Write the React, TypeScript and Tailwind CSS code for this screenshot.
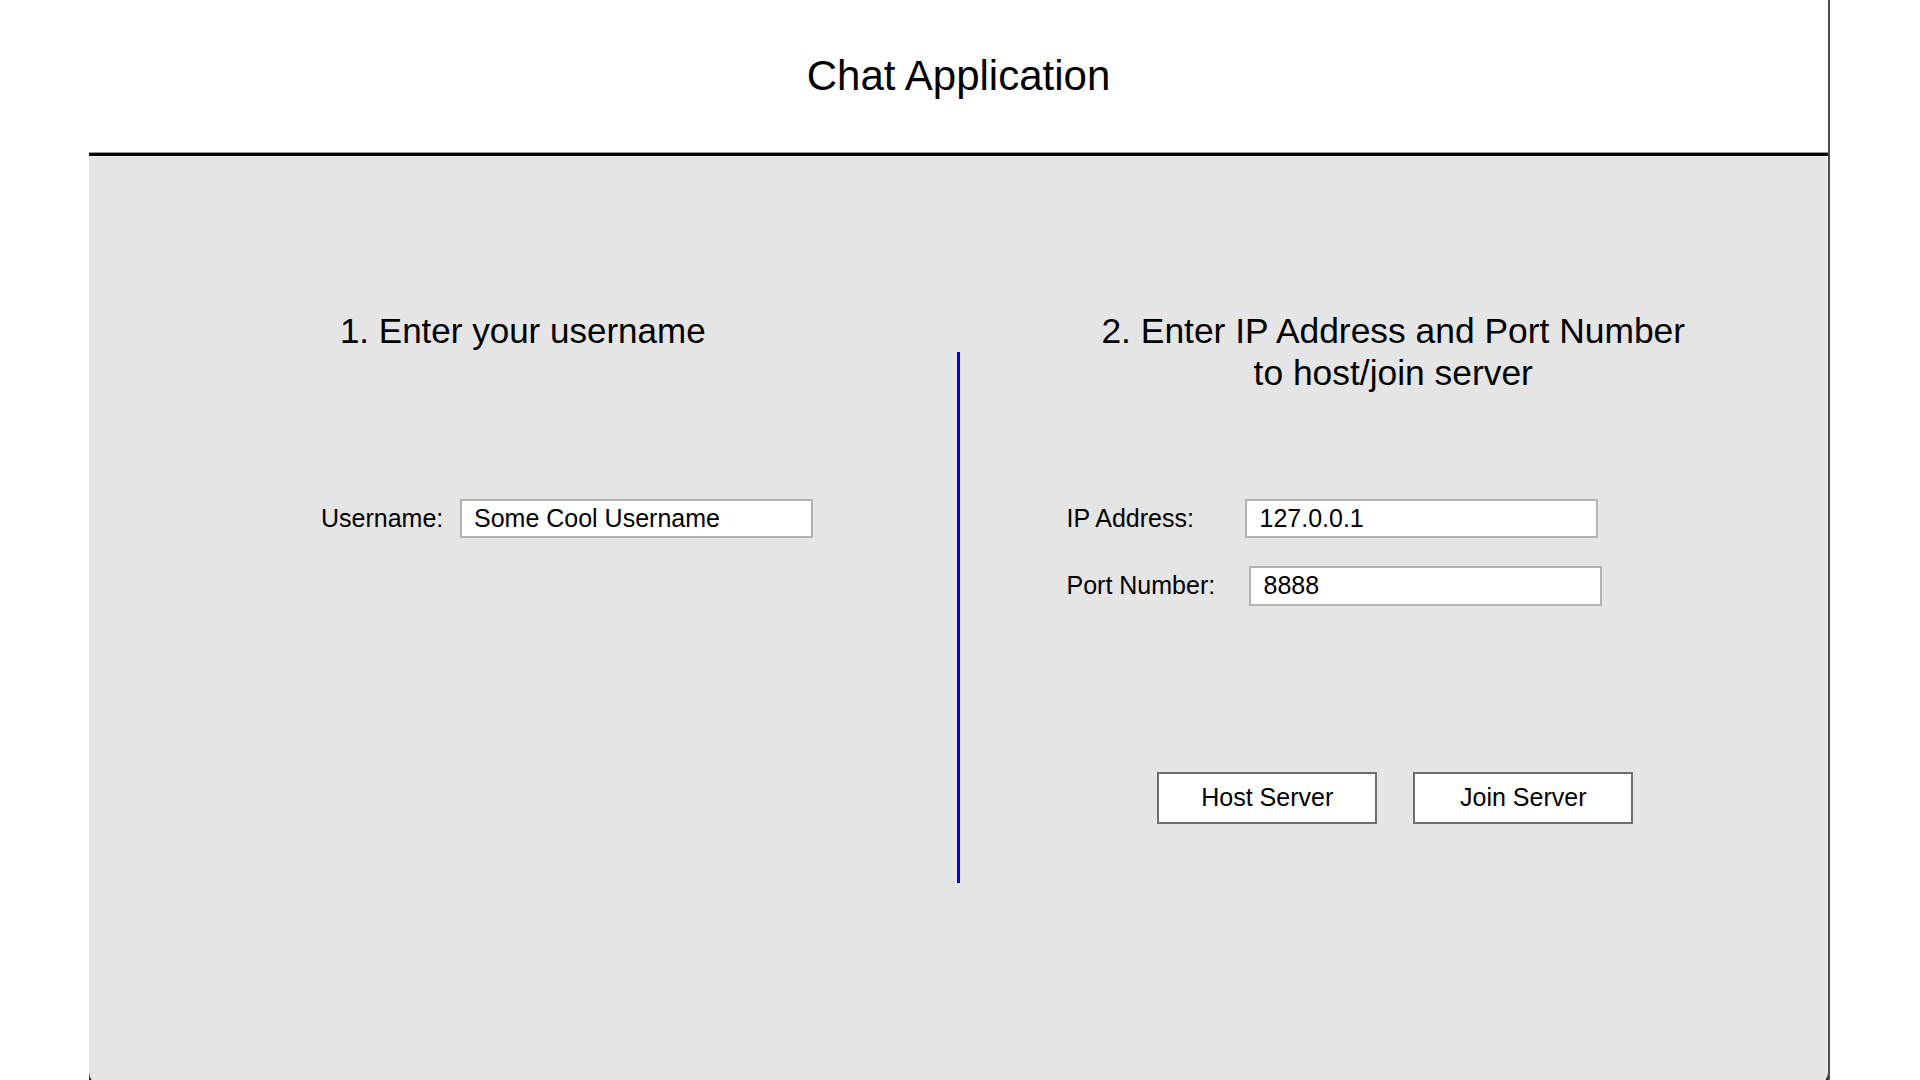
import React from "react";

const font = { fontFamily: '"Liberation Sans", Arial, sans-serif' };

export default function App() {
  return (
    <div className="w-[1920px] h-[1080px] overflow-hidden bg-white text-black" style={font}>
      <div className="ml-[89px] w-[1741px] h-[1086px] flex flex-col bg-[#2a2a2a] border-r-2 border-[#4d4d4d]">
        {/* header */}
        <div className="h-[152px] bg-white flex items-center justify-center">
          <h1 className="text-[42px] leading-none font-normal">Chat Application</h1>
        </div>
        <div className="h-px bg-[#9a9a9a]" />
        <div className="h-[3px] bg-black" />
        <div className="h-px bg-[#f3f3f3]" />
        {/* panel */}
        <div className="flex-1 flex bg-[#e5e5e5] rounded-b-[14px] border-r border-[#efefef]">
          {/* left half */}
          <div className="w-[868px] flex flex-col pt-[153px]">
            <h2 className="text-[35px] leading-[42px] text-center font-normal">1. Enter your username</h2>
            <div className="mt-[147px] pl-[232px] flex items-center h-[39px]">
              <label className="w-[139px] text-[25px]">Username:</label>
              <div className="w-[353px] h-[39px] bg-white border-2 border-[#b3b3b3] flex items-center pl-[12px] text-[25px]">
                Some Cool Username
              </div>
            </div>
          </div>
          {/* divider */}
          <div className="w-[3px] mt-[195px] h-[531px] bg-[#0000ff]" />
          {/* right half */}
          <div className="w-[868px] flex flex-col pt-[153px]">
            <h2 className="text-[35.4px] leading-[42px] text-center font-normal">
              2. Enter IP Address and Port Number
              <br />
              to host/join server
            </h2>
            <div className="mt-[105px] pl-[107px] flex items-center h-[39px]">
              <label className="w-[178px] text-[25px]">IP Address:</label>
              <div className="w-[353px] h-[39px] bg-white border-2 border-[#b3b3b3] flex items-center pl-[13px] text-[25px]">
                127.0.0.1
              </div>
            </div>
            <div className="mt-[28px] pl-[107px] flex items-center h-[40px]">
              <label className="w-[182px] text-[25px]">Port Number:</label>
              <div className="w-[353px] h-[40px] bg-white border-2 border-[#b3b3b3] flex items-center pl-[13px] text-[25px]">
                8888
              </div>
            </div>
            <div className="mt-[166px] pl-[4px] flex justify-center gap-[36px]">
              <button className="w-[220px] h-[52px] bg-white border-2 border-[#6e6e6e] text-[25px] flex items-center justify-center">
                Host Server
              </button>
              <button className="w-[220px] h-[52px] bg-white border-2 border-[#6e6e6e] text-[25px] flex items-center justify-center">
                Join Server
              </button>
            </div>
          </div>
        </div>
      </div>
    </div>
  );
}
